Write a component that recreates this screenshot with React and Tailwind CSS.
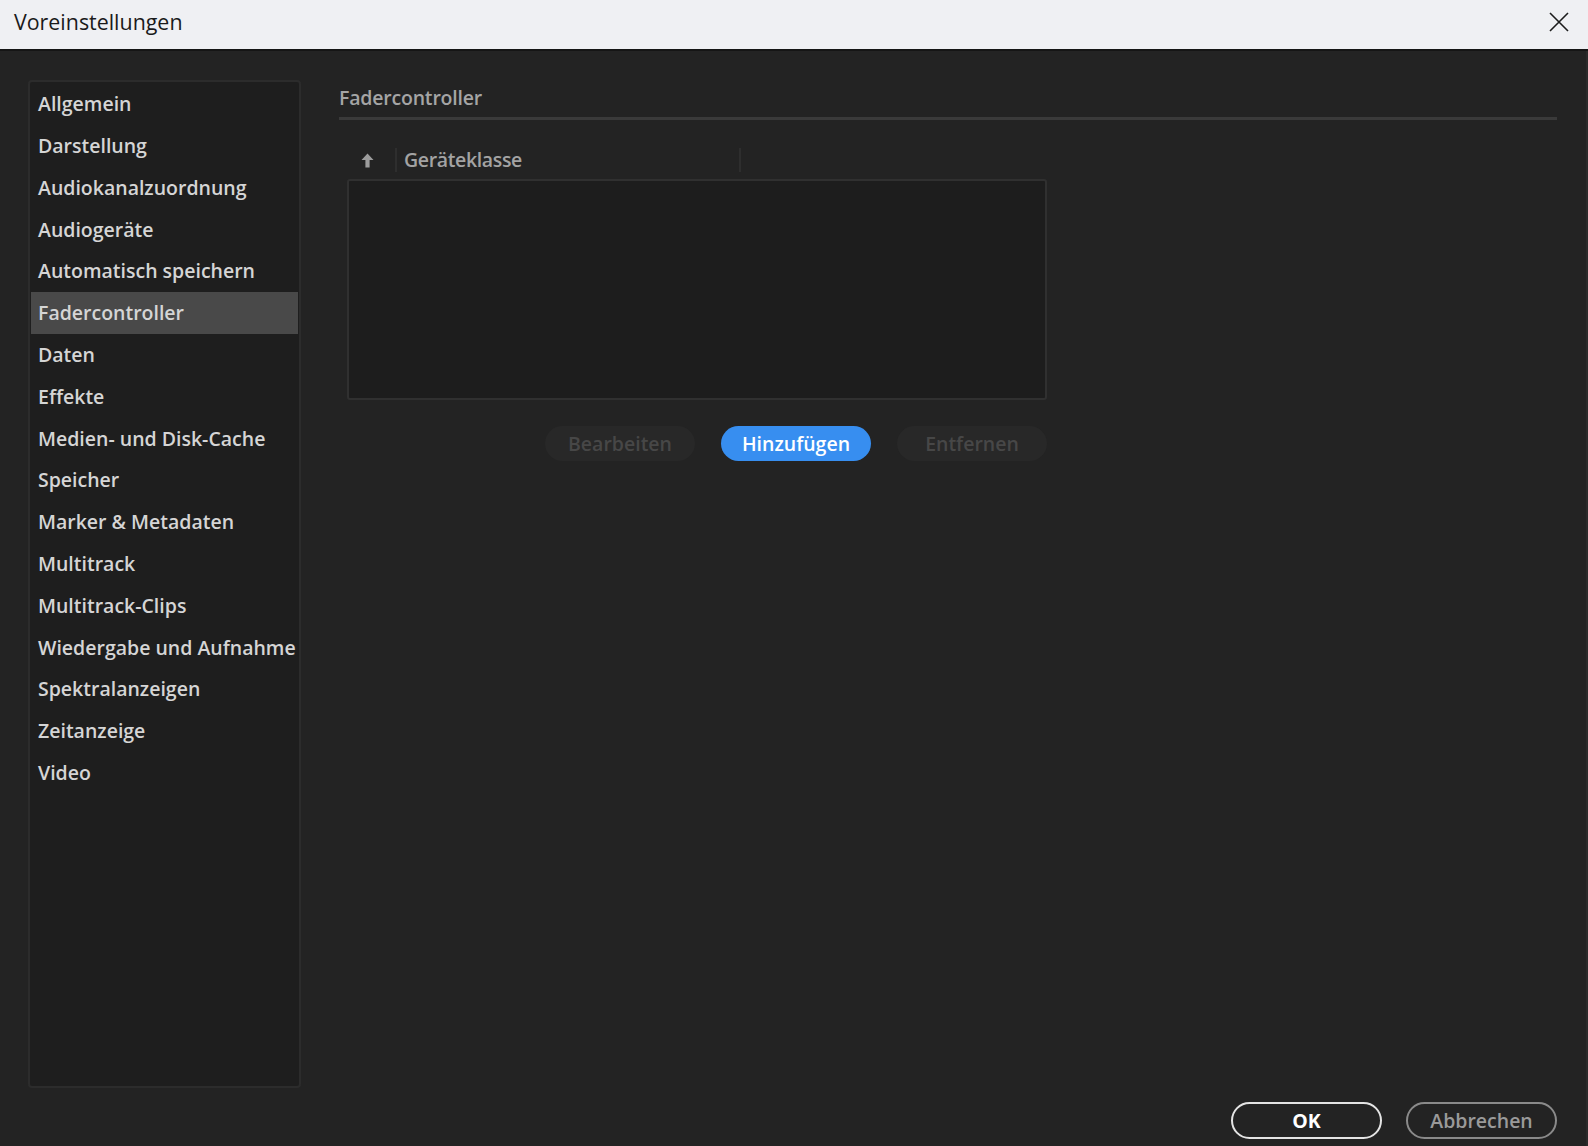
import { useState } from 'react';

const KATEGORIEN = [
  'Allgemein',
  'Darstellung',
  'Audiokanalzuordnung',
  'Audiogeräte',
  'Automatisch speichern',
  'Fadercontroller',
  'Daten',
  'Effekte',
  'Medien- und Disk-Cache',
  'Speicher',
  'Marker & Metadaten',
  'Multitrack',
  'Multitrack-Clips',
  'Wiedergabe und Aufnahme',
  'Spektralanzeigen',
  'Zeitanzeige',
  'Video',
];

const schrift = { fontFamily: '"Open Sans", "Noto Sans", sans-serif' };

function SchliessenIcon() {
  return (
    <svg width="20" height="20" viewBox="0 0 20 20" className="text-[#1c1c1c]">
      <path d="M1 1 L19 19 M19 1 L1 19" stroke="currentColor" strokeWidth="1.6" fill="none" />
    </svg>
  );
}

function PfeilHoch() {
  return (
    <svg width="13" height="15" viewBox="0 0 13 15" className="text-[#9c9c9c]">
      <path d="M6.5 0.5 L12.5 7 L8.6 7 L8.6 14.5 L4.4 14.5 L4.4 7 L0.5 7 Z" fill="currentColor" />
    </svg>
  );
}

export default function App() {
  const [aktiv, setAktiv] = useState('Fadercontroller');

  return (
    <div className="w-[1588px] h-[1146px] flex flex-col bg-[#232323] overflow-hidden" style={schrift}>
      {/* Titelleiste */}
      <div className="h-[51px] shrink-0 bg-[#eff0f3] border-b-2 border-[#151515] flex items-center justify-between pl-[14px] pr-[19px] pb-[6px]">
        <span className="text-[21.4px] text-[#1a1a1a] leading-none">Voreinstellungen</span>
        <SchliessenIcon />
      </div>

      <div className="flex-1 flex flex-col pl-[28px] pr-[29px] pt-[29px] border-r-2 border-[#2b2b2b]">
        <div className="flex">
          {/* Kategorienliste */}
          <div className="w-[273px] h-[1008px] shrink-0 bg-[#1e1e1e] border-2 border-[#2c2c2c] rounded-[4px] px-[1px] pt-[1px]">
            {KATEGORIEN.map((k) => (
              <button
                key={k}
                onClick={() => setAktiv(k)}
                className={`w-full h-[41.8px] flex items-center pl-[7px] text-left text-[19.5px] font-semibold text-[#d5d5d5] ${
                  aktiv === k ? 'bg-[#494949]' : ''
                }`}
              >
                {k}
              </button>
            ))}
          </div>

          {/* Einstellungsbereich */}
          <div className="flex-1 ml-[38px]">
            <div className="h-[40px] border-b-[3px] border-[#3a3a3a] pt-[4px]">
              <span className="text-[19.5px] leading-[28px] font-semibold tracking-[-0.2px] text-[#a5a5a5]">Fadercontroller</span>
            </div>

            <div className="ml-[8px] w-[700px]">
              <div className="mt-[26px] h-[28px] flex items-center">
                <div className="w-[48px] h-full flex items-center pl-[14px]">
                  <PfeilHoch />
                </div>
                <div className="w-[344px] h-[24px] border-l-2 border-[#2e2e2e] flex items-center pl-[7px]">
                  <span className="text-[19.5px] font-semibold tracking-[-0.35px] text-[#a3a3a3]">Geräteklasse</span>
                </div>
                <div className="h-[24px] border-l-2 border-[#2e2e2e]" />
              </div>

              <div className="mt-[5px] h-[221px] bg-[#1d1d1d] border-2 border-[#303030] rounded-[3px]" />

              <div className="mt-[26px] flex justify-end gap-[26px]">
                <button disabled className="w-[150px] h-[35px] rounded-full bg-[#282828] text-[19.5px] font-semibold text-[#474747]">
                  Bearbeiten
                </button>
                <button className="w-[150px] h-[35px] rounded-full bg-[#378ef0] text-[19.5px] font-semibold text-white">
                  Hinzufügen
                </button>
                <button disabled className="w-[150px] h-[35px] rounded-full bg-[#282828] text-[19.5px] font-semibold text-[#474747]">
                  Entfernen
                </button>
              </div>
            </div>
          </div>
        </div>

        {/* Fußzeile */}
        <div className="mt-[14px] flex justify-end gap-[24px]">
          <button className="w-[151px] h-[37px] rounded-full border-2 border-[#e4e4e4] text-[19.5px] font-bold text-white">
            OK
          </button>
          <button className="w-[151px] h-[37px] rounded-full border-2 border-[#8a8a8a] text-[19.5px] font-semibold text-[#9a9a9a]">
            Abbrechen
          </button>
        </div>
      </div>
    </div>
  );
}
